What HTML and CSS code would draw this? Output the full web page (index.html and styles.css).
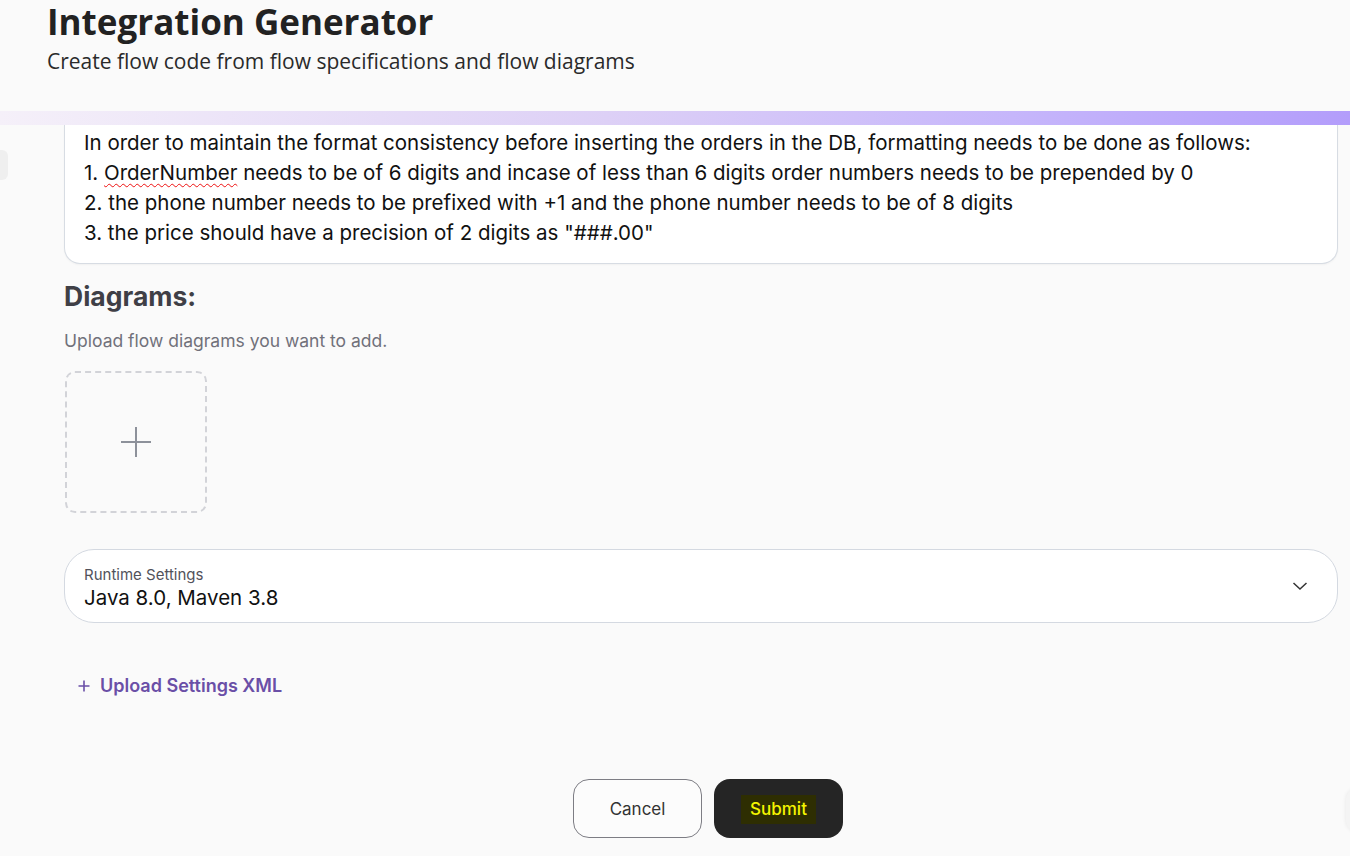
FILE: index.html
```html
<!DOCTYPE html>
<html>
<head>
<meta charset="utf-8">
<link rel="stylesheet" href="styles.css">
</head>
<body>
<div class="edge-left"></div>
<div class="edge-right"></div>
<header class="header">
  <h1 class="title">Integration Generator</h1>
  <p class="subtitle">Create flow code from flow specifications and flow diagrams</p>
</header>
<div class="bar"></div>
<main class="content">
  <div class="card">
    <div class="line">In order to maintain the format consistency before inserting the orders in the DB, formatting needs to be done as follows:</div>
    <div class="line">1. <span class="typo">OrderNumber</span> needs to be of 6 digits and incase of less than 6 digits order numbers needs to be prepended by 0</div>
    <div class="line">2. the phone number needs to be prefixed with +1 and the phone number needs to be of 8 digits</div>
    <div class="line">3. the price should have a precision of 2 digits as "###.00"</div>
  </div>
  <h2 class="section-title">Diagrams:</h2>
  <p class="section-desc">Upload flow diagrams you want to add.</p>
  <div class="dropzone">
    <svg width="32" height="32" viewBox="0 0 32 32"><path d="M16 1v30M1 16h30" stroke="#8d919a" stroke-width="2" fill="none"/></svg>
  </div>
  <div class="select">
    <div class="select-text">
      <div class="select-label">Runtime Settings</div>
      <div class="select-value">Java 8.0, Maven 3.8</div>
    </div>
    <svg class="chevron" width="16" height="10" viewBox="0 0 16 10"><path d="M1.5 2l6.5 6 6.5-6" stroke="#333" stroke-width="1.5" fill="none"/></svg>
  </div>
  <div class="upload-link">
    <svg class="plus" width="12" height="12" viewBox="0 0 12 12"><path d="M6 0.5v11M0.5 6h11" stroke="#6a4fa7" stroke-width="1.6" fill="none"/></svg>
    <span>Upload Settings XML</span>
  </div>
  <div class="actions">
    <button class="btn btn-cancel">Cancel</button>
    <button class="btn btn-submit"><span class="mark">Submit</span></button>
  </div>
</main>
</body>
</html>
```
FILE: styles.css
```css
html, body {
  margin: 0;
  padding: 0;
  background: #fafafa;
  height: 856px;
  overflow: hidden;
}
body {
  font-family: Inter, "Noto Sans", sans-serif;
  color: #111;
  position: relative;
}
.edge-left {
  position: absolute;
  left: -8px;
  top: 150px;
  width: 16px;
  height: 30px;
  border-radius: 6px;
  background: #efefef;
}
.edge-right {
  position: absolute;
  right: -20px;
  top: 788px;
  width: 24px;
  height: 44px;
  border-radius: 12px;
  background: #f4f4f4;
  box-shadow: 0 0 4px rgba(0,0,0,0.08);
}
.header {
  height: 111px;
  padding: 0 47px;
  box-sizing: border-box;
  font-family: "Open Sans", Roboto, sans-serif;
}
.title {
  margin: 0;
  font-size: 35px;
  line-height: 44px;
  font-weight: 700;
  color: #222;
}
.subtitle {
  margin: 4px 0 0;
  font-size: 21px;
  line-height: 26px;
  color: #2a2a2a;
}
.bar {
  height: 14px;
  background: linear-gradient(90deg, #f5f0f9 0%, #ddd0f6 45%, #c6b6fb 75%, #b39dfb 100%);
}
.content {
  padding: 0 12px 0 64px;
}
.card {
  background: #fff;
  border: 1px solid #d7dce3;
  border-top: none;
  border-radius: 0 0 16px 16px;
  padding: 3px 19px 15px;
  font-size: 20.5px;
  line-height: 30px;
  color: #111;
  box-shadow: 0 1px 2px rgba(0,0,0,0.04);
}
.line {
  white-space: nowrap;
}
.typo {
  text-decoration: underline wavy #e11;
  text-decoration-thickness: 1px;
  text-underline-offset: 3px;
}
.section-title {
  margin: 16px 0 0;
  font-size: 26.5px;
  line-height: 32px;
  font-weight: 700;
  color: #3f3f46;
}
.section-desc {
  margin: 17px 0 0;
  font-size: 17.5px;
  line-height: 24px;
  color: #71717a;
}
.dropzone {
  margin-top: 18px;
  margin-left: 1px;
  width: 142px;
  height: 142px;
  box-sizing: border-box;
  border: 2px dashed #d2d3d8;
  border-radius: 10px;
  display: flex;
  align-items: center;
  justify-content: center;
}
.select {
  margin-top: 36px;
  height: 74px;
  box-sizing: border-box;
  background: #fff;
  border: 1px solid #d4d9e1;
  border-radius: 30px;
  display: flex;
  align-items: center;
  justify-content: space-between;
  padding: 4px 29px 0 19px;
}
.select-label {
  font-size: 15px;
  line-height: 19px;
  color: #52525b;
}
.select-value {
  font-size: 20.5px;
  line-height: 27px;
  color: #111;
}
.chevron {
  display: block;
  margin-top: -4px;
}
.upload-link {
  margin-top: 51px;
  padding-left: 78px;
  margin-left: -64px;
  font-size: 18px;
  line-height: 24px;
  font-weight: 600;
  color: #6a4fa7;
  display: flex;
  align-items: center;
  gap: 10px;
}
.plus {
  display: block;
}
.actions {
  margin-top: 81px;
  padding-left: 14px;
  display: flex;
  justify-content: center;
  gap: 12px;
}
.btn {
  width: 129px;
  height: 59px;
  border-radius: 16px;
  font-family: Inter, "Noto Sans", sans-serif;
  font-size: 17px;
  cursor: pointer;
}
.btn-cancel {
  background: #fcfcfc;
  border: 1px solid #7d7d84;
  color: #333;
}
.btn-submit {
  background: #252525;
  border: none;
  color: #f5f500;
  font-weight: 500;
}
.mark {
  background: #2e2e02;
  padding: 4px 9px 5px;
}
```
